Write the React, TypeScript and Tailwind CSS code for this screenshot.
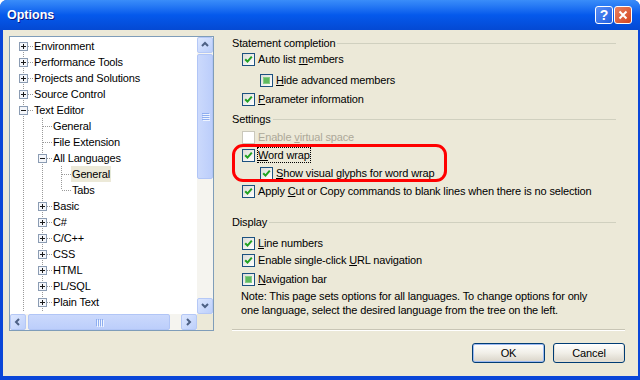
import React from "react";

type Check = "on" | "off" | "mixed";

type TreeItem = {
  level: number;
  text: string;
  exp?: "+" | "-";
  sel?: boolean;
  first?: boolean;
  last?: boolean;
};

const treeItems: TreeItem[] = [
  { level: 0, text: "Environment", exp: "+", first: true },
  { level: 0, text: "Performance Tools", exp: "+" },
  { level: 0, text: "Projects and Solutions", exp: "+" },
  { level: 0, text: "Source Control", exp: "+" },
  { level: 0, text: "Text Editor", exp: "-" },
  { level: 1, text: "General" },
  { level: 1, text: "File Extension" },
  { level: 1, text: "All Languages", exp: "-" },
  { level: 2, text: "General", sel: true },
  { level: 2, text: "Tabs", last: true },
  { level: 1, text: "Basic", exp: "+" },
  { level: 1, text: "C#", exp: "+" },
  { level: 1, text: "C/C++", exp: "+" },
  { level: 1, text: "CSS", exp: "+" },
  { level: 1, text: "HTML", exp: "+" },
  { level: 1, text: "PL/SQL", exp: "+" },
  { level: 1, text: "Plain Text", exp: "+" },
];

const DOT = "#9a9a9a";

const Guide = () => (
  <svg width="19" height="16" className="shrink-0">
    <line x1="9.5" y1="0" x2="9.5" y2="16" stroke={DOT} strokeDasharray="1 1" />
  </svg>
);

const Connector = ({ item }: { item: TreeItem }) => (
  <svg width="19" height="16" className="shrink-0">
    {!item.first && (
      <line x1="9.5" y1="0" x2="9.5" y2="8" stroke={DOT} strokeDasharray="1 1" />
    )}
    {!item.last && (
      <line x1="9.5" y1="8" x2="9.5" y2="16" stroke={DOT} strokeDasharray="1 1" />
    )}
    <line
      x1={item.exp ? 14 : 10}
      y1="8.5"
      x2="19"
      y2="8.5"
      stroke={DOT}
      strokeDasharray="1 1"
    />
    {item.exp && (
      <>
        <rect x="5.5" y="4.5" width="8" height="8" fill="#f4f6fa" stroke="#8b9cb3" />
        <line x1="7" y1="8.5" x2="12" y2="8.5" stroke="#1a1a1a" />
        {item.exp === "+" && (
          <line x1="9.5" y1="6" x2="9.5" y2="11" stroke="#1a1a1a" />
        )}
      </>
    )}
  </svg>
);

const Chevron = ({ dir }: { dir: "up" | "down" | "left" | "right" }) => {
  const d = {
    up: "M1 5 L4 2 L7 5",
    down: "M1 2 L4 5 L7 2",
    left: "M5 1 L2 4 L5 7",
    right: "M2 1 L5 4 L2 7",
  }[dir];
  return (
    <svg width="8" height="8" viewBox="0 0 8 8">
      <path d={d} fill="none" stroke="#4d6185" strokeWidth="2" />
    </svg>
  );
};

const ScrollBtn = ({ dir }: { dir: "up" | "down" | "left" | "right" }) => (
  <div className="flex h-[16px] w-[16px] shrink-0 items-center justify-center rounded-[2px] border border-[#b5c8f6] bg-gradient-to-br from-[#dde7fe] to-[#bccffb]">
    <Chevron dir={dir} />
  </div>
);

const Grip = ({ vertical }: { vertical?: boolean }) => (
  <div className={`flex ${vertical ? "flex-col gap-[1px]" : "gap-[1px]"}`}>
    {[0, 1, 2, 3].map((i) => (
      <span
        key={i}
        className={`${vertical ? "h-[1px] w-[7px]" : "h-[7px] w-[1px]"} bg-[#8eaef0] shadow-[1px_1px_0_#eef4ff]`}
      />
    ))}
  </div>
);

const CheckBox = ({ state, disabled }: { state: Check; disabled?: boolean }) => (
  <span
    className={`flex h-[13px] w-[13px] shrink-0 items-center justify-center border ${
      disabled
        ? "border-[#cac8bb] bg-white"
        : "border-[#1c5180] bg-gradient-to-br from-[#dcdcd7] to-white"
    }`}
  >
    {state === "on" && (
      <svg width="9" height="9" viewBox="0 0 9 9">
        <path d="M1.2 4.2 L3.5 6.6 L7.8 1.6" fill="none" stroke="#21a121" strokeWidth="2" />
      </svg>
    )}
    {state === "mixed" && (
      <span className="h-[7px] w-[7px] border border-[#86cc86] bg-[#5fba5f]" />
    )}
  </span>
);

const Option = ({
  state,
  label,
  indent = 1,
  className = "",
  disabled,
  focus,
}: {
  state: Check;
  label: React.ReactNode;
  indent?: number;
  className?: string;
  disabled?: boolean;
  focus?: boolean;
}) => (
  <div
    className={`flex h-4 items-center gap-[3px] ${indent === 2 ? "pl-[28px]" : "pl-[10px]"} ${className}`}
  >
    <CheckBox state={state} disabled={disabled} />
    <span
      className={`whitespace-nowrap leading-[14px] ${disabled ? "text-[#aca899]" : "text-black"} ${
        focus ? "outline outline-1 outline-dotted outline-black" : ""
      }`}
    >
      {label}
    </span>
  </div>
);

const Group = ({ title, className = "" }: { title: string; className?: string }) => (
  <div className={`mr-[9px] flex h-4 items-center ${className}`}>
    <span className="whitespace-nowrap">{title}</span>
    <span className="ml-[2px] h-[1px] flex-1 bg-[#d0d0bf]" />
  </div>
);

const U = ({ children }: { children: React.ReactNode }) => (
  <span className="underline underline-offset-[1px]">{children}</span>
);

export default function App() {
  return (
    <div className="flex h-[380px] w-[640px] flex-col overflow-hidden rounded-t-[7px] bg-[#0a46d8] font-['Liberation_Sans',Arial,sans-serif] text-[11px] tracking-[-0.15px] text-black">
      {/* title bar */}
      <div className="flex h-[30px] shrink-0 items-center bg-gradient-to-b from-[#3a8df9] via-[#0559ec] to-[#0449d3] pl-[7px] pr-[8px]">
        <span className="flex-1 text-[12.5px] font-bold tracking-normal text-white [text-shadow:1px_1px_0_#0a1883]">
          Options
        </span>
        <div className="flex h-[18px] w-[18px] items-center justify-center rounded-[3px] border border-white bg-gradient-to-br from-[#5a8ef5] to-[#1f5fe0] text-[14px] font-bold leading-none text-white">
          ?
        </div>
        <div className="ml-[1px] flex h-[18px] w-[18px] items-center justify-center rounded-[3px] border border-white bg-gradient-to-br from-[#e9805f] to-[#d4441b]">
          <svg width="10" height="10" viewBox="0 0 10 10">
            <path d="M1.5 1.5 L8.5 8.5 M8.5 1.5 L1.5 8.5" stroke="white" strokeWidth="2" />
          </svg>
        </div>
      </div>

      {/* client area */}
      <div className="mb-[4px] ml-[3px] mr-[2px] flex flex-1 bg-[#ece9d8]">
        {/* tree */}
        <div className="pl-[6px] pt-[6px]">
          <div className="flex h-[295px] w-[205px] flex-col border border-[#7f9db9] bg-white">
            <div className="flex min-h-0 flex-1">
              <div className="min-w-0 flex-1 overflow-hidden pl-[4px] pt-[1px]">
                {treeItems.map((item, i) => (
                  <div key={i} className="flex h-4 items-center">
                    {Array.from({ length: item.level }).map((_, k) => (
                      <Guide key={k} />
                    ))}
                    <Connector item={item} />
                    <span
                      className={`whitespace-nowrap px-[1px] leading-4 ${item.sel ? "bg-[#ece9d8]" : ""}`}
                    >
                      {item.text}
                    </span>
                  </div>
                ))}
                <div className="flex h-[2px] overflow-hidden">
                  <Guide />
                  <Guide />
                </div>
              </div>
              {/* vertical scrollbar */}
              <div className="flex w-[16px] flex-col bg-[#f5f4ef]">
                <ScrollBtn dir="up" />
                <div className="mt-[1px] flex h-[125px] items-center justify-center rounded-[2px] border border-[#b1c5f6] bg-gradient-to-r from-[#cbd9fc] to-[#bccefb]">
                  <Grip vertical />
                </div>
                <div className="flex-1" />
                <ScrollBtn dir="down" />
              </div>
            </div>
            {/* horizontal scrollbar */}
            <div className="flex h-[16px] shrink-0">
              <div className="flex flex-1 bg-[#f5f4ef]">
                <ScrollBtn dir="left" />
                <div className="ml-[2px] flex w-[142px] items-center justify-center rounded-[2px] border border-[#b1c5f6] bg-gradient-to-b from-[#cbd9fc] to-[#bccefb]">
                  <Grip />
                </div>
                <div className="flex-1" />
                <ScrollBtn dir="right" />
              </div>
              <div className="w-[16px] bg-[#ece9d8]" />
            </div>
          </div>
        </div>

        {/* options */}
        <div className="relative flex flex-1 flex-col pl-[18px] pr-[13px] pt-[5px]">
          <Group title="Statement completion" />
          <Option state="on" label={<>Auto list <U>m</U>embers</>} />
          <Option state="mixed" indent={2} className="mt-[5px]" label={<><U>H</U>ide advanced members</>} />
          <Option state="on" className="mt-[3px]" label={<><U>P</U>arameter information</>} />

          <Group title="Settings" className="mt-[4px]" />
          <Option state="off" disabled className="mt-[2px]" label={<>Enable <U>v</U>irtual space</>} />
          <Option state="on" focus className="mt-[2px]" label={<><U>W</U>ord wrap</>} />
          <Option state="on" indent={2} className="mt-[2px]" label={<><U>S</U>how visual glyphs for word wrap</>} />
          <Option state="on" className="mt-[2px]" label={<>Apply <U>C</U>ut or Copy commands to blank lines when there is no selection</>} />

          <Group title="Display" className="mt-[15px]" />
          <Option state="on" className="mt-[5px]" label={<><U>L</U>ine numbers</>} />
          <Option state="on" className="mt-[1px]" label={<>Enable single-click <U>U</U>RL navigation</>} />
          <Option state="mixed" className="mt-[3px]" label={<><U>N</U>avigation bar</>} />

          <p className="mt-[2px] pl-[9px] leading-[14px]">
            Note: This page sets options for all languages. To change options for only
            <br />
            one language, select the desired language from the tree on the left.
          </p>

          <div className="mt-[12px] h-[2px] border-t border-[#c8c5b5] border-b-white" style={{ borderBottomWidth: 1 }} />

          <div className="mt-[12px] flex justify-end gap-[8px]">
            <button className="h-[20px] w-[73px] rounded-[3px] border border-[#003c74] bg-gradient-to-b from-white via-[#f1efe8] to-[#d9d4c8] shadow-[inset_0_0_0_1px_#9dbaf2]">
              OK
            </button>
            <button className="h-[20px] w-[72px] rounded-[3px] border border-[#003c74] bg-gradient-to-b from-white via-[#f1efe8] to-[#d9d4c8] shadow-[inset_0_-1px_0_1px_#e3dfd4]">
              Cancel
            </button>
          </div>

          {/* red annotation */}
          <div className="pointer-events-none absolute left-[18px] top-[114px] h-[38px] w-[215px] rounded-[11px] border-[3px] border-[#ff0000]" />
        </div>
      </div>
    </div>
  );
}
